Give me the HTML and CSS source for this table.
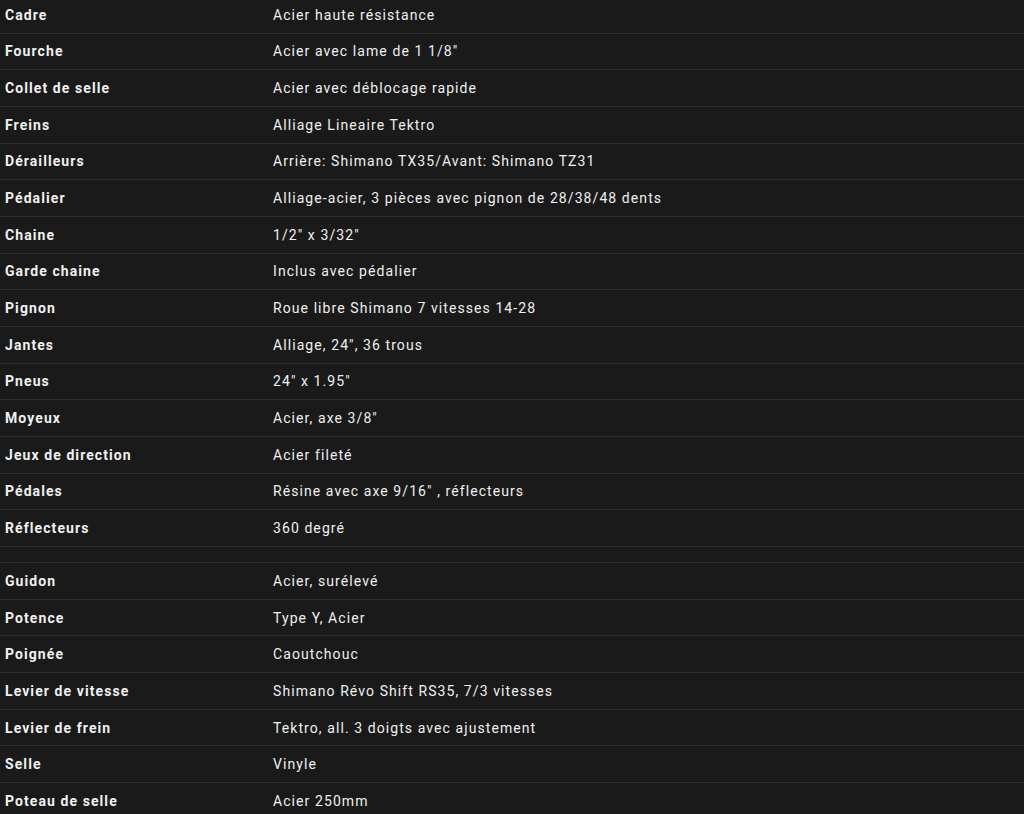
FILE: index.html
```html
<!DOCTYPE html>
<html lang="fr">
<head>
<meta charset="utf-8">
<title>Spécifications</title>
<link rel="stylesheet" href="styles.css">
</head>
<body>
<div class="specs">
  <div class="row"><div class="label">Cadre</div><div class="value">Acier haute résistance</div></div>
  <div class="row"><div class="label">Fourche</div><div class="value">Acier avec lame de 1 1/8"</div></div>
  <div class="row"><div class="label">Collet de selle</div><div class="value">Acier avec déblocage rapide</div></div>
  <div class="row"><div class="label">Freins</div><div class="value">Alliage Lineaire Tektro</div></div>
  <div class="row"><div class="label">Dérailleurs</div><div class="value">Arrière: Shimano TX35/Avant: Shimano TZ31</div></div>
  <div class="row"><div class="label">Pédalier</div><div class="value">Alliage-acier, 3 pièces avec pignon de 28/38/48 dents</div></div>
  <div class="row"><div class="label">Chaine</div><div class="value">1/2" x 3/32"</div></div>
  <div class="row"><div class="label">Garde chaine</div><div class="value">Inclus avec pédalier</div></div>
  <div class="row"><div class="label">Pignon</div><div class="value">Roue libre Shimano 7 vitesses 14-28</div></div>
  <div class="row"><div class="label">Jantes</div><div class="value">Alliage, 24", 36 trous</div></div>
  <div class="row"><div class="label">Pneus</div><div class="value">24" x 1.95"</div></div>
  <div class="row"><div class="label">Moyeux</div><div class="value">Acier, axe 3/8"</div></div>
  <div class="row"><div class="label">Jeux de direction</div><div class="value">Acier fileté</div></div>
  <div class="row"><div class="label">Pédales</div><div class="value">Résine avec axe 9/16" , réflecteurs</div></div>
  <div class="row"><div class="label">Réflecteurs</div><div class="value">360 degré</div></div>
  <div class="row spacer"></div>
  <div class="row"><div class="label">Guidon</div><div class="value">Acier, surélevé</div></div>
  <div class="row"><div class="label">Potence</div><div class="value">Type Y, Acier</div></div>
  <div class="row"><div class="label">Poignée</div><div class="value">Caoutchouc</div></div>
  <div class="row"><div class="label">Levier de vitesse</div><div class="value">Shimano Révo Shift RS35, 7/3 vitesses</div></div>
  <div class="row"><div class="label">Levier de frein</div><div class="value">Tektro, all. 3 doigts avec ajustement</div></div>
  <div class="row"><div class="label">Selle</div><div class="value">Vinyle</div></div>
  <div class="row"><div class="label">Poteau de selle</div><div class="value">Acier 250mm</div></div>
</div>
</body>
</html>
```

FILE: styles.css
```css
html, body {
  margin: 0;
  padding: 0;
  background: #1a1a1a;
}

body {
  font-family: Roboto, "Liberation Sans", sans-serif;
  font-size: 14px;
  color: #f0f0f0;
  letter-spacing: 1.08px;
  overflow: hidden;
}

.specs {
  margin-top: -3px;
}

.row {
  display: grid;
  grid-template-columns: 268px 1fr;
  align-items: center;
  height: 35.66px;
  border-bottom: 1px solid #2e2e2e;
}

.row.spacer {
  height: 15.3px;
}

.label {
  padding-left: 5px;
  font-weight: 700;
}

.value {
  padding-left: 5px;
  font-weight: 400;
}
```
